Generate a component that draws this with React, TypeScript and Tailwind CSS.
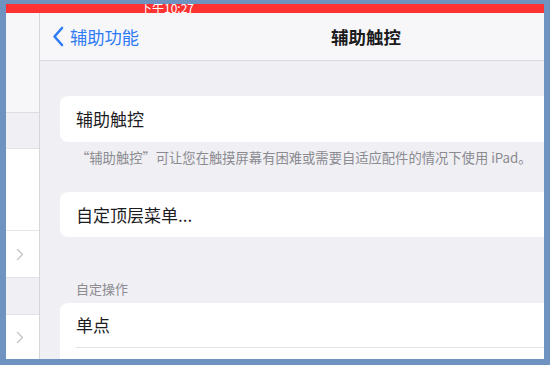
import React from 'react';

const font = { fontFamily: '"Noto Sans CJK SC", "Noto Sans", sans-serif' };

const Chevron: React.FC<{ className?: string }> = ({ className }) => (
	<svg className={className} viewBox="0 0 8 13" fill="none">
		<path d="M1.5 1.5 L6.5 6.5 L1.5 11.5" stroke="currentColor" strokeWidth="1.4" strokeLinecap="round" strokeLinejoin="round" />
	</svg>
);

const Sidebar: React.FC = () => (
	<div className="w-[34px] shrink-0 flex flex-col border-r border-[#d6d6db] bg-white">
		<div className="h-[100px] bg-[#f7f7fa] border-b border-[#dcdce1]" />
		<div className="h-[36px] bg-[#efeff4] border-b border-[#e2e2e6]" />
		<div className="h-[82px] bg-white border-b border-[#e6e6ea]" />
		<div className="h-[47px] bg-white flex items-center pl-[10px] border-b border-[#e2e2e6]">
			<Chevron className="w-[8px] h-[13px] text-[#c5c5ca]" />
		</div>
		<div className="h-[37px] bg-[#efeff4] border-b border-[#e2e2e6]" />
		<div className="flex-1 bg-white flex items-start pt-[16px] pl-[10px]">
			<Chevron className="w-[8px] h-[13px] text-[#c5c5ca]" />
		</div>
	</div>
);

const NavBar: React.FC = () => (
	<div className="h-[48px] shrink-0 bg-[#f7f7f9] border-b border-[#d9d9de] flex items-center relative">
		<div className="flex items-center pl-[12px] text-[#2f7bf5]">
			<svg className="w-[12px] h-[21px]" viewBox="0 0 12 21" fill="none">
				<path d="M10 2 L2.5 10.5 L10 19" stroke="currentColor" strokeWidth="2.6" strokeLinecap="round" strokeLinejoin="round" />
			</svg>
			<span className="ml-[6px] text-[17.3px] leading-[22px]">辅助功能</span>
		</div>
		<div className="absolute inset-0 flex items-center justify-center pointer-events-none">
			<span className="text-[17.5px] leading-[22px] font-semibold text-[#1b1b1d]">辅助触控</span>
		</div>
	</div>
);

export default function App() {
	return (
		<div className="w-[550px] h-[365px] bg-[#6f93c0] pt-[4px] pl-[6px] pr-[6px] pb-[6px]" style={font}>
			<div className="w-full h-full flex flex-col overflow-hidden">
				<div className="h-[9px] shrink-0 bg-[#fd3232] overflow-hidden">
					<div className="pl-[134px] -mt-[3px] text-white text-[12px] leading-[14px]">下午10:27</div>
				</div>
				<div className="flex-1 flex overflow-hidden">
					<Sidebar />
					<div className="flex-1 overflow-hidden">
						<div className="w-[652px] h-full flex flex-col bg-[#efeff4]">
							<NavBar />
							<div className="pl-[20px] pr-[20px] pt-[35px] flex flex-col">
								<div className="h-[46px] bg-white rounded-[8px] flex items-center px-[16px]">
									<span className="text-[17px] text-[#1d1d1f]">辅助触控</span>
								</div>
								<p className="mt-[8px] px-[16px] text-[13.3px] leading-[16px] text-[#8b8b90]">
									“辅助触控”可让您在触摸屏幕有困难或需要自适应配件的情况下使用 iPad。
								</p>
								<div className="mt-[26px] h-[45px] bg-white rounded-[8px] flex items-center px-[16px]">
									<span className="text-[17px] text-[#1d1d1f]">自定顶层菜单...</span>
								</div>
								<p className="mt-[44px] px-[16px] text-[13px] leading-[16px] text-[#8b8b90]">自定操作</p>
								<div className="mt-[6px] bg-white rounded-t-[8px] pl-[16px]">
									<div className="h-[45px] flex items-center border-b border-[#e3e3e7]">
										<span className="text-[17px] text-[#1d1d1f]">单点</span>
									</div>
									<div className="h-[45px]" />
								</div>
							</div>
						</div>
					</div>
				</div>
			</div>
		</div>
	);
}
